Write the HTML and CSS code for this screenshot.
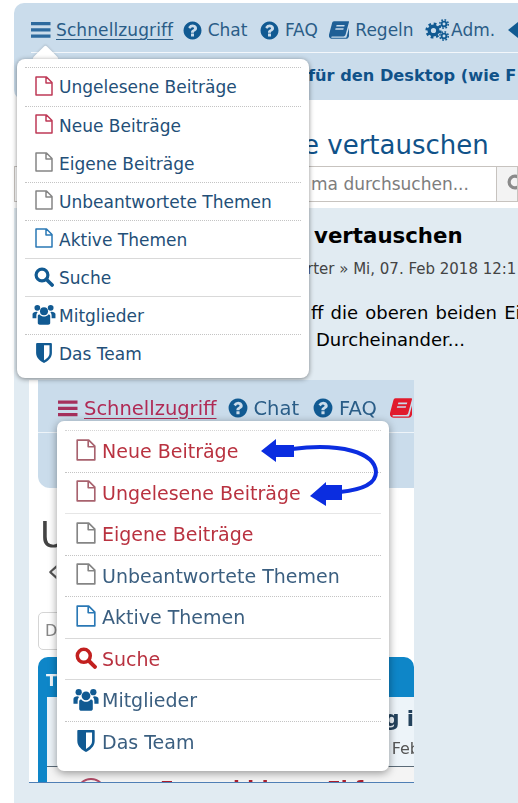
FILE: index.html
```html
<!DOCTYPE html>
<html lang="de">
<head>
<meta charset="utf-8">
<title>Schnellzugriff</title>
<link rel="stylesheet" href="styles.css">
</head>
<body>
<svg class="defs" width="0" height="0" aria-hidden="true">
  <symbol id="i-bars" viewBox="0 0 20 16"><path d="M0 0h19.500v3.200H0zM0 6.300h19.500v3.200H0zM0 12.600h19.500v3.200H0z" fill="currentColor"/></symbol>
  <symbol id="i-help" viewBox="0 0 1792 1792"><path fill="currentColor" d="M1024 1376v-192q0-14-9-23t-23-9H800q-14 0-23 9t-9 23v192q0 14 9 23t23 9h192q14 0 23-9t9-23zm256-672q0-88-55.500-163T1086 425t-170-41q-243 0-371 213-15 24 8 42l132 100q7 6 19 6 16 0 25-12 53-68 86-92 34-24 86-24 48 0 85.500 26t37.500 59q0 38-20 61t-68 45q-63 28-115.500 86.500T768 1020v36q0 14 9 23t23 9h192q14 0 23-9t9-23q0-19 21.500-49.500T1100 957q32-18 49-28.500t46-35 44.500-48 28-60.500 12.500-81zm384 192q0 209-103 385.500T1281.500 1561 896 1664t-385.500-103T231 1281.500 128 896t103-385.500T510.500 231 896 128t385.500 103T1561 510.500 1664 896z"/></symbol>
  <symbol id="i-book" viewBox="0 0 20 18"><path fill="currentColor" d="M5 .2h14.400c.5 0 .7.400.6.900l-3.400 12.500c-.3 1.100-1 1.800-2.200 1.800H3.300c-.8 0-1.200.3-1.100.8.100.4.500.6 1.200.6h13.100c.5 0 .8-.3 1-.9L20 6.800v8.400c-.5 1.700-1.500 2.600-3.200 2.600H3.500C1.200 17.800-.4 16-.1 14L3.100 2C3.400.9 4 .2 5 .2z"/><path fill="#cadceb" d="M7.600 4h8.100l-.4 1.500H7.200zM6.600 7.300h8.100l-.4 1.500H6.200z"/></symbol>
  <symbol id="i-gears" viewBox="0 0 24 22"><g fill="none" stroke="currentColor"><circle cx="8.500" cy="11.500" r="4.300" stroke-width="3.400"/><circle cx="8.500" cy="11.500" r="6.800" stroke-width="2.600" stroke-dasharray="2.700 2.640"/><circle cx="19" cy="5" r="2.400" stroke-width="1.900"/><circle cx="19" cy="5" r="4.200" stroke-width="1.600" stroke-dasharray="1.650 1.650"/><circle cx="19" cy="17" r="2.400" stroke-width="1.900"/><circle cx="19" cy="17" r="4.200" stroke-width="1.600" stroke-dasharray="1.650 1.650"/></g></symbol>
  <symbol id="i-file" viewBox="0 0 18 20"><path d="M1 1h10.500L17 6.500V19H1zM11 1v6h6" fill="none" stroke="currentColor" stroke-width="1.500" stroke-linejoin="round"/></symbol>
  <symbol id="i-search" viewBox="0 0 20 20"><circle cx="8" cy="8" r="5.900" fill="none" stroke="currentColor" stroke-width="3.200"/><path d="M12.500 12.500l5.600 5.600" stroke="currentColor" stroke-width="3.600" stroke-linecap="round"/></symbol>
  <symbol id="i-group" viewBox="0 0 24 22"><g fill="currentColor"><circle cx="12" cy="7.500" r="4.200"/><circle cx="5" cy="4" r="3"/><circle cx="19" cy="4" r="3"/><path d="M5.500 12.500c0-1 1-1.500 2-1.500 1 1.500 3 2.200 4.500 2.200s3.500-.7 4.500-2.200c1 0 2 .5 2 1.500V20c0 1-1 1.800-2 1.800H7.500c-1 0-2-.8-2-1.800z"/><path d="M3.800 8C2 8 0 9 0 10.500V15h4v-2.500C4 10.800 4.500 9.500 5.500 8.500zM20.200 8c1.800 0 3.800 1 3.800 2.500V15h-4v-2.500c0-1.700-.5-3-1.500-4z"/></g></symbol>
  <symbol id="i-shield" viewBox="0 0 16 20"><path fill="currentColor" d="M1 0h14c.5 0 .900.400.900.900V10c0 5-4.500 8.300-7.900 10C4.600 18.300.1 15 .1 10V.9C.1.400.5 0 1 0z"/><path fill="#fff" d="M8 2.300h5.500V10c0 3.500-3 5.800-5.500 7.300z"/></symbol>
</svg>

<div class="page">
  <header class="head">
    <nav class="nav">
      <span class="nav-item nav-first"><svg class="ic ic-bars"><use href="#i-bars"/></svg><a class="quick">Schnellzugriff</a></span>
      <span class="nav-item"><svg class="ic ic-help"><use href="#i-help"/></svg>Chat</span>
      <span class="nav-item"><svg class="ic ic-help"><use href="#i-help"/></svg>FAQ</span>
      <span class="nav-item"><svg class="ic ic-book"><use href="#i-book"/></svg>Regeln</span>
      <span class="nav-item nav-adm"><svg class="ic ic-gears"><use href="#i-gears"/></svg>Adm.</span>
      <span class="nav-back"></span>
    </nav>
    <p class="head-sub">für den Desktop (wie F</p>
  </header>

  <h2 class="topic-title">e vertauschen</h2>
  <div class="search">
    <div class="search-input">ma durchsuchen...</div>
    <div class="search-btn"><svg class="ic-sbtn"><use href="#i-search"/></svg></div>
  </div>

  <section class="post">
    <h3 class="post-title">vertauschen</h3>
    <p class="post-meta">rter » Mi, 07. Feb 2018 12:1</p>
    <p class="post-line post-line1">ff die oberen beiden Ei</p>
    <p class="post-line post-line2">Durcheinander...</p>

    <div class="shot">
      <div class="shot-head">
        <nav class="shot-nav">
          <span class="nav-item nav-first"><svg class="ic s-bars"><use href="#i-bars"/></svg><a class="s-quick">Schnellzugriff</a></span>
          <span class="nav-item"><svg class="ic s-help"><use href="#i-help"/></svg>Chat</span>
          <span class="nav-item"><svg class="ic s-help"><use href="#i-help"/></svg>FAQ</span>
          <span class="nav-item"><svg class="ic s-book"><use href="#i-book"/></svg></span>
        </nav>
      </div>
      <div class="shot-title">U</div>
      <div class="shot-back">‹</div>
      <div class="shot-search">D</div>
      <div class="shot-forum">
        <div class="shot-forum-head">T</div>
        <div class="shot-forum-body">
          <div class="shot-topic"><b class="shot-g">g i</b><span class="shot-feb">Feb</span></div>
          <div class="shot-next"><span class="shot-circle"></span><b class="shot-red">F</b><b class="shot-red shot-red1">ldd</b><b class="shot-red shot-red2">Fl f</b></div>
        </div>
      </div>

      <ul class="menu shot-menu">
        <li class="row s-red"><svg class="file fi-rose"><use href="#i-file"/></svg>Neue Beiträge</li>
        <li class="row dotted s-red"><svg class="file fi-rose"><use href="#i-file"/></svg>Ungelesene Beiträge</li>
        <li class="row solid-light s-red"><svg class="file fi-gray"><use href="#i-file"/></svg>Eigene Beiträge</li>
        <li class="row dotted"><svg class="file fi-gray"><use href="#i-file"/></svg>Unbeantwortete Themen</li>
        <li class="row dotted"><svg class="file fi-blue"><use href="#i-file"/></svg>Aktive Themen</li>
        <li class="row solid s-red"><svg class="glyph fi-red"><use href="#i-search"/></svg>Suche</li>
        <li class="row solid"><svg class="glyph glyph-wide"><use href="#i-group"/></svg>Mitglieder</li>
        <li class="row dotted"><svg class="glyph"><use href="#i-shield"/></svg>Das Team</li>
      </ul>

      <svg class="arrows" viewBox="0 0 385 402" width="385" height="402" aria-hidden="true">
        <path d="M263 69C311 63 346 72 347 92C347 105 331 110 311 112" fill="none" stroke="#0b2de0" stroke-width="4"/>
        <path d="M232 71L247 59V65H265V77H247V82z" fill="#0b2de0"/>
        <path d="M281 116L297 102V105H313V120H297V126z" fill="#0b2de0"/>
      </svg>
    </div>
  </section>

  <div class="menu-arrow"></div>
  <ul class="menu main-menu">
    <li class="row dotted"><svg class="file fi-rose"><use href="#i-file"/></svg>Ungelesene Beiträge</li>
    <li class="row dotted"><svg class="file fi-rose"><use href="#i-file"/></svg>Neue Beiträge</li>
    <li class="row"><svg class="file fi-gray"><use href="#i-file"/></svg>Eigene Beiträge</li>
    <li class="row dotted"><svg class="file fi-gray"><use href="#i-file"/></svg>Unbeantwortete Themen</li>
    <li class="row dotted"><svg class="file fi-blue"><use href="#i-file"/></svg>Aktive Themen</li>
    <li class="row solid"><svg class="glyph"><use href="#i-search"/></svg>Suche</li>
    <li class="row solid"><svg class="glyph glyph-wide"><use href="#i-group"/></svg>Mitglieder</li>
    <li class="row dotted"><svg class="glyph"><use href="#i-shield"/></svg>Das Team</li>
  </ul>
</div>
</body>
</html>
```

FILE: styles.css
```css
* { box-sizing: border-box; }
html, body { margin: 0; height: 100%; }
body { width: 518px; height: 803px; overflow: hidden; background: #fff; font-family: "DejaVu Sans", Verdana, sans-serif; color: #000; }
.defs { position: absolute; }
.page { position: relative; width: 518px; height: 803px; overflow: hidden; padding: 3px 0 0 14px; }
p, h2, h3, ul { margin: 0; padding: 0; list-style: none; }

/* header */
.head { height: 97px; background: #cadceb; border-radius: 10px 0 0 10px; padding: 0 0 0 17px; overflow: hidden; }
.nav { display: flex; align-items: center; height: 50px; padding-top: 4px; white-space: nowrap; font-size: 17px; color: #2a5d87; }
.head-sub { border-top: 1px solid #f3f7fb; padding: 13px 0 0 277px; height: 46px; margin-top: -1px; font-size: 16.200px; font-weight: bold; color: #105289; white-space: nowrap; overflow: hidden; line-height: 20px; }
.nav-item { display: flex; align-items: center; flex: none; margin-right: 11.500px; }
.nav-first { margin-right: 8.500px; }
.nav-adm { margin-right: 13px; }
.ic { flex: none; color: #115a92; display: block; }
.ic-bars { width: 20px; height: 16px; margin-right: 5px; color: #2d6a9e; }
.ic-help { width: 21px; height: 21px; margin-right: 5px; }
.ic-book { width: 20px; height: 18px; margin-right: 6px; color: #1e5f96; }
.ic-gears { width: 24px; height: 22px; margin-right: 2px; }
.quick { color: #2a5d87; text-decoration: underline; text-underline-offset: 3px; letter-spacing: .1px; }
.nav-back { flex: none; width: 0; height: 0; border: 8px solid transparent; border-left-width: 0; border-right: 10px solid #115a92; }

/* title */
.topic-title { margin-top: 26px; padding-left: 289px; height: 38px; line-height: 38px; font-size: 26px; font-weight: normal; color: #105289; white-space: nowrap; }
.search { display: flex; height: 36px; margin-top: 2px; }
.search-input { flex: none; width: 483px; border: 1px solid #c7c3bf; background: #fff; color: #7d7d7d; font-size: 17px; line-height: 34px; padding-left: 296px; white-space: nowrap; overflow: hidden; }
.search-btn { flex: 1; background: #f3f3f3; border: 1px solid #c7c3bf; border-left: 0; padding: 7px 0 0 10px; overflow: hidden; }
.ic-sbtn { display: block; width: 20px; height: 20px; color: #8a8a8a; }

/* post */
.post { margin-top: 6px; height: 595px; background: #e1ebf2; padding-top: 15px; }
.post-title { height: 26px; line-height: 26px; padding-left: 300px; font-size: 21.300px; font-weight: bold; white-space: nowrap; }
.post-meta { margin-top: 10px; height: 20px; line-height: 20px; padding-left: 293px; font-size: 15px; color: #444; white-space: nowrap; }
.post-line { margin-top: 24px; height: 27px; line-height: 20px; padding-left: 297px; font-size: 18px; white-space: nowrap; }
.post-line1 { word-spacing: 1.500px; }
.post-line2 { margin-top: 0; padding-left: 302px; }

/* embedded screenshot */
.shot { position: relative; margin: 23px 0 0 15px; width: 385px; height: 403px; background: #fff; border-bottom: 1px solid #4f7fb5; overflow: hidden; filter: blur(.35px); }
.shot-head { margin-left: 9px; height: 108px; background: #cadceb; border-radius: 0 0 0 12px; }
.shot-nav { display: flex; align-items: center; height: 53px; padding: 4px 0 0 20px; white-space: nowrap; font-size: 19.500px; color: #2a5d87; border-bottom: 1px solid #eef4f9; }
.shot-nav .nav-item { margin-right: 13px; }
.shot-nav .nav-first { margin-right: 10px; }
.s-bars { width: 20px; height: 17px; margin-right: 6px; color: #a5305c; }
.s-quick { color: #b02a55; text-decoration: underline; text-underline-offset: 3px; }
.s-help { width: 22px; height: 22px; margin-right: 5px; }
.s-book { width: 22px; height: 20px; color: #e11a2c; }
.shot-title { margin-left: 11px; margin-top: 26px; height: 42px; line-height: 42px; font-size: 36px; color: #444; }
.shot-back { margin-left: 18px; height: 34px; line-height: 30px; font-size: 30px; color: #555; }
.shot-search { margin-left: 9px; margin-top: 22px; width: 60px; height: 38px; line-height: 36px; padding-left: 6px; font-size: 16px; color: #888; background: #fff; border: 1px solid #d5d5d5; border-radius: 5px; }
.shot-forum { margin: 7px 0 0 9px; height: 125px; background: #0e86c8; border-radius: 10px 10px 0 0; padding-top: 13px; }
.shot-forum-head { height: 27px; line-height: 22px; padding-left: 8px; font-size: 16px; font-weight: bold; color: #eef6fb; }
.shot-forum-body { margin-left: 9px; height: 100px; background: #fff; }
.shot-topic { position: relative; height: 70px; background: #edf4f9; border-bottom: 1px solid #5b6b78; }
.shot-g { position: absolute; right: 0; top: 10px; font-size: 21px; color: #24425c; }
.shot-feb { position: absolute; right: -6px; top: 42px; font-size: 16px; color: #555; }
.shot-next { position: relative; height: 30px; background: #f4f4f4; }
.shot-circle { position: absolute; left: 29px; top: 11px; width: 30px; height: 30px; border: 2px solid #b04a66; border-radius: 50%; }
.shot-red { position: absolute; left: 113px; top: 9px; font-size: 20px; color: #a81e2e; }
.shot-red1 { left: 186px; }
.shot-red2 { left: 280px; }

.arrows { position: absolute; left: 0; top: 0; }

/* menus */
.menu { position: absolute; background: #fff; color: #234f78; white-space: nowrap; }
.main-menu { left: 17px; top: 59px; width: 292px; height: 319px; padding: 8px 8px 7px; border-radius: 8px; box-shadow: 0 1px 5px rgba(0, 0, 0, .45); font-size: 17px; }
.menu-arrow { position: absolute; left: 36px; top: 49px; width: 19px; height: 19px; background: #fff; transform: rotate(45deg); box-shadow: -1px -1px 2px rgba(0, 0, 0, .1); border-radius: 2px; }
.row { display: flex; align-items: center; height: 38px; border-top: 1px solid transparent; }
.row.dotted { border-top: 1px dotted #c4c4c4; }
.row.solid { border-top: 1px solid #d9d9d9; }
.row.solid-light { border-top: 1px solid #e6e6e6; }
.main-menu .row:first-child { height: 39px; }
.file { flex: none; width: 18px; height: 20px; margin: -1px 6px 2px 10px; }
.glyph { flex: none; width: 20px; height: 20px; margin: 0 5px 2px 9px; color: #115a92; }
.glyph-wide { width: 24px; height: 21px; margin: 0 3px 2px 7px; }
.fi-rose { color: #bf3a57; }
.fi-gray { color: #858585; }
.fi-blue { color: #2a78b5; }
.fi-red { color: #c2201f; }

.shot-menu { left: 28px; top: 41px; width: 332px; height: 350px; padding: 9px 8px 0; border-radius: 7px; box-shadow: 0 2px 8px rgba(0, 0, 0, .4); font-size: 19px; color: #3b5f80; }
.shot-menu .row { height: 41.500px; }
.shot-menu .row:first-child { border-top: 1px dotted #d4d4d4; }
.shot-menu .file { width: 20px; height: 22px; margin: -1px 6px 2px 11px; }
.shot-menu .glyph { width: 22px; height: 22px; margin: 0 5px 2px 10px; }
.shot-menu .glyph-wide { width: 26px; height: 23px; margin: 0 3px 2px 8px; }
.shot-menu .fi-red { color: #c2201f; }
.shot-menu .fi-rose { color: #a8626e; }
.s-red { color: #b93240; }
```
